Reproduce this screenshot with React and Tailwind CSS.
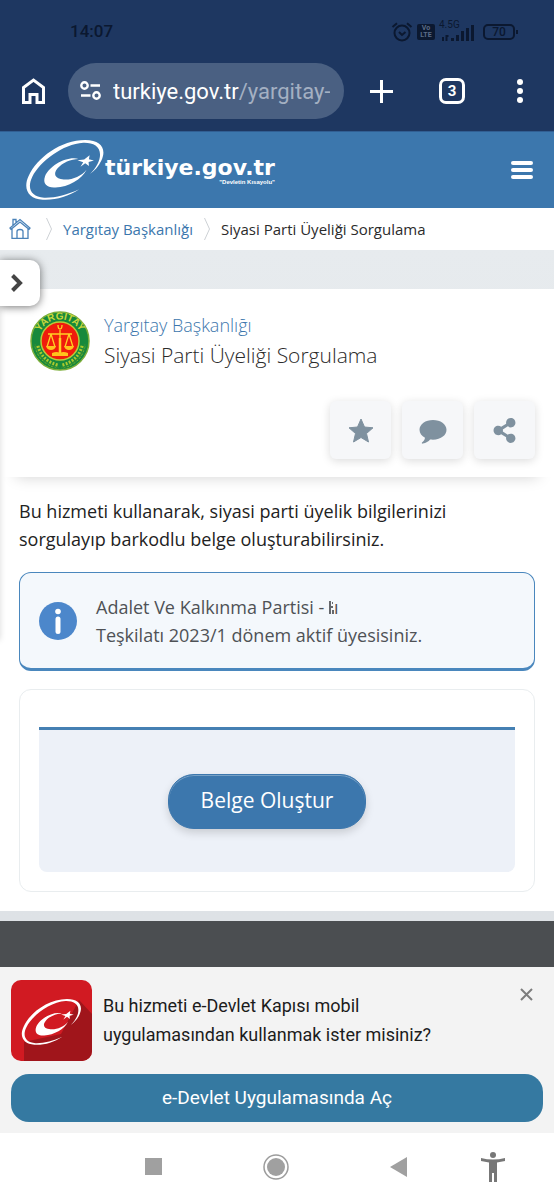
import React from 'react';
import { FaShareAlt } from 'react-icons/fa';

const RING =
    'M178 161C145 183 108 194 70 192C28 190 10 160 28 122C52 68 124 15 196 15C244 15 260 42 244 76C236 93 224 106 210 116C228 98 240 78 240 58C240 32 218 22 190 23C130 27 62 78 39 124C22 158 36 184 74 186C106 187 142 178 178 161Z';
const CRESCENT =
    'M176 71C140 62 90 92 77 122C68 146 84 158 108 156C146 154 186 132 200 103C184 123 156 134 132 132C106 130 100 116 114 99C128 82 154 71 176 71Z';
const STAR = '209,60 207,72 222,76 206,80 207,92 196,84 182,94 190,81 173,75 193,73';

function Swirl({ className }) {
    return (
        <svg viewBox="18 12 236 184" className={className} fill="currentColor" aria-hidden="true">
            <path d={RING} />
            <path d={CRESCENT} />
            <polygon points={STAR} />
        </svg>
    );
}

function StatusBar() {
    return (
        <div className="flex h-16 items-center justify-between pl-[70px] pr-9 text-[#0b1830]">
            <span className="text-[17px] font-medium">14:07</span>
            <div className="flex items-center gap-1">
                <svg width="22" height="20" viewBox="0 0 22 20" fill="none" stroke="currentColor" strokeWidth="2">
                    <circle cx="11" cy="11" r="7.5" />
                    <path d="M1.5 5L6 1.2M20.5 5L16 1.2M8 10l3 3 3.5-3" />
                </svg>
                <span className="flex h-4 w-[18px] flex-col items-center justify-center rounded-xs bg-[#0b1830] text-[7px] leading-[7px] font-bold text-[#5b6c88]">
                    <span>Vo</span>
                    <span>LTE</span>
                </span>
                <span className="relative">
                    <span className="absolute left-0 -top-1 text-[10px] leading-[12px]">4.5G</span>
                    <svg width="36" height="18" viewBox="0 0 36 18" fill="currentColor" className="block">
                        <path d="M3 14h2v4H3zM6.500 12h3v2H8.500v4h-2zM12 15h3v3h-3zM17 12h3v6h-3zM22 8h3v10h-3zM27 5h3v13h-3zM32 2h3v16h-3z" />
                    </svg>
                </span>
                <span className="ml-1 flex items-center">
                    <span className="flex h-4 w-8 items-center justify-center rounded-[5px] border-2 border-current text-[12px] leading-3 font-medium">
                        70
                    </span>
                    <span className="ml-px h-1 w-0.5 bg-current" />
                </span>
            </div>
        </div>
    );
}

function BrowserBar() {
    return (
        <div className="-mt-px flex h-14 items-center pl-[21px] pr-[30px] text-white">
            <button aria-label="Ana sayfa">
                <svg width="25" height="28" viewBox="0 0 25 28" fill="none" stroke="currentColor" strokeWidth="3">
                    <path d="M2.500 25.500V10.500L12.500 3l10 7.500v15H16v-8H9v8z" />
                </svg>
            </button>
            <div className="ml-[22px] flex h-14 min-w-0 flex-1 items-center rounded-full bg-[#4a6082] pl-3 pr-[10px]">
                <svg width="22" height="20" viewBox="0 0 22 20" fill="none" stroke="currentColor" strokeWidth="2.400" className="shrink-0">
                    <circle cx="4.500" cy="4.500" r="3.200" />
                    <path d="M10.500 4.500H20M1 14.500h9.500" />
                    <circle cx="16.500" cy="14.500" r="3.200" />
                </svg>
                <span className="ml-[11px] overflow-hidden text-[22px] whitespace-nowrap">
                    turkiye.gov.tr<span className="text-[#a4b0c2]">/yargitay-</span>
                </span>
            </div>
            <button aria-label="Yeni sekme" className="ml-[26px]">
                <svg width="23" height="23" viewBox="0 0 23 23" stroke="currentColor" strokeWidth="3">
                    <path d="M11.500 0v23M0 11.500h23" />
                </svg>
            </button>
            <button className="ml-[46px] flex size-[26px] items-center justify-center rounded-[7px] border-3 border-white text-[15px] leading-4 font-bold">
                3
            </button>
            <button aria-label="Menü" className="ml-[51px] flex w-[8px] flex-col items-center gap-[3px]">
                <span className="size-[6px] rounded-full bg-white" />
                <span className="size-[6px] rounded-full bg-white" />
                <span className="size-[6px] rounded-full bg-white" />
            </button>
        </div>
    );
}

function SiteHeader() {
    return (
        <header className="flex h-[77px] items-center justify-between border-t border-[#315f93] bg-[#3c77ad] pl-[25px] pr-[21px] text-white">
            <a href="#" className="flex items-center">
                <Swirl className="h-[62px] w-20" />
                <span className="flex flex-col items-end font-['DejaVu_Sans',sans-serif] font-bold">
                    <span className="text-[22px] leading-6">türkiye.gov.tr</span>
                    <span className="font-['Liberation_Sans',sans-serif] text-[6px] leading-[4px]">"Devletin Kısayolu"</span>
                </span>
            </a>
            <button aria-label="Site menüsü" className="flex w-[22px] flex-col gap-[3px]">
                <span className="h-1 rounded-xs bg-white" />
                <span className="h-1 rounded-xs bg-white" />
                <span className="h-1 rounded-xs bg-white" />
            </button>
        </header>
    );
}

function Chevron() {
    return (
        <svg width="6" height="24" viewBox="0 0 6 24" fill="none" stroke="#cdd1d5" className="shrink-0">
            <path d="M.5 1l5 11-5 11" />
        </svg>
    );
}

function Breadcrumb() {
    return (
        <nav className="flex h-[42px] items-center bg-white pl-[9px] font-['Open_Sans',sans-serif] text-[15px] whitespace-nowrap">
            <a href="#" aria-label="Ana sayfa" className="mr-[15px]">
                <svg width="22" height="22" viewBox="0 0 22 22" fill="none" stroke="#4a82b8" strokeWidth="1.300">
                    <path d="M3 10v10.300h16V10M1 10l10-8.500L21 10l-1 1.300L11 4 2 11.300zM4 7V1.500h3V5M8 20v-6.500q0-2 3-2t3 2V20" />
                </svg>
            </a>
            <Chevron />
            <a href="#" className="mx-[11px] text-[#3c77ad]">Yargıtay Başkanlığı</a>
            <Chevron />
            <span className="ml-[11px] text-[#2b2b2b]">Siyasi Parti Üyeliği Sorgulama</span>
        </nav>
    );
}

function Emblem() {
    return (
        <svg width="60" height="62" viewBox="0 0 60 62" className="shrink-0" aria-hidden="true">
            <defs>
                <path id="arc" d="M8.500 36A22 22 0 1 1 51.500 36" />
            </defs>
            <circle cx="30" cy="31" r="29" fill="#17893c" stroke="#7cae3a" strokeWidth="1.500" />
            <path d="M7 36Q11 52 28 56M53 36Q49 52 32 56" fill="none" stroke="#a9c92e" strokeWidth="5" strokeDasharray="2 1.500" />
            <path d="M5 34Q9 53 29 58M55 34Q51 53 31 58" fill="none" stroke="#2d8c35" strokeWidth="1.500" />
            <circle cx="30" cy="31" r="19" fill="#f01c0c" stroke="#b8cc38" strokeWidth="1.500" />
            <text fontSize="10" fontWeight="700" fill="#c9d63c" textAnchor="middle" className="font-['Liberation_Sans',sans-serif]">
                <textPath href="#arc" startOffset="50%">YARGITAY</textPath>
            </text>
            <g fill="none" stroke="#ffcf24" strokeWidth="1.300">
                <path d="M30 20v24M18 24h24M21 24l-4 13M21 24l4 13M39 24l-4 13M39 24l4 13" />
                <path d="M28 15q0 4 2 4t2-4" />
                <path d="M30 28v16" strokeWidth="2.500" />
            </g>
            <path d="M16 36h10q-1 4-5 4t-5-4zM34 36h10q-1 4-5 4t-5-4zM22 43q5-2 8 0 3-2 8 0v3H22z" fill="#ffc21c" />
        </svg>
    );
}

function ActionButton({ label, children }) {
    return (
        <button
            aria-label={label}
            className="flex h-[58px] w-[61px] items-center justify-center rounded-md bg-[#f6f7f9] text-[#7f919f] shadow-[0_2px_10px_rgba(0,0,0,0.14)]"
        >
            {children}
        </button>
    );
}

function ServiceHeader() {
    return (
        <section className="bg-white pt-[21px] pb-[18px] pl-[30px] pr-[19px] shadow-[0_16px_14px_-16px_rgba(0,0,0,0.18)]">
            <div className="flex items-start gap-[14px]">
                <Emblem />
                <h1 className="font-light">
                    <a href="#" className="block text-[18px] leading-[30px] text-[#3c77ad]">Yargıtay Başkanlığı</a>
                    <span className="block text-[21px] leading-[30px] text-[#2b2b2b]">Siyasi Parti Üyeliği Sorgulama</span>
                </h1>
            </div>
            <div className="mt-[29px] flex justify-end gap-[11px]">
                <ActionButton label="Favorilere ekle">
                    <svg width="26" height="25" viewBox="0 0 26 25" fill="currentColor" stroke="currentColor" strokeLinejoin="round">
                        <path d="M13 1l3.500 8 8.500.8-6.500 5.700 2 8.500L13 19.500 5.500 24l2-8.500L1 9.800 9.500 9z" />
                    </svg>
                </ActionButton>
                <ActionButton label="Yorum yap">
                    <svg width="28" height="24" viewBox="0 0 28 24" fill="currentColor" className="mt-1">
                        <path d="M14 0C6.500 0 .5 4.200.5 9.800c0 3.500 2.300 6.200 5.500 7.900-.3 2-1.400 3.600-3 4.800-.5.700 0 1.300.9 1.100 3-.5 5.600-2.100 7.200-4.100 10.200 1.100 16.400-4 16.400-9.700C27.500 4.200 21.500 0 14 0z" />
                    </svg>
                </ActionButton>
                <ActionButton label="Paylaş">
                    <FaShareAlt size={25} />
                </ActionButton>
            </div>
        </section>
    );
}

function InfoBox() {
    return (
        <div className="mt-[19px] flex h-[99px] items-center rounded-xl border border-b-3 border-[#4a87bd] bg-[#f4f8fc] pl-[19px] text-[18px] leading-7 text-[#4f5256]">
            <svg width="38" height="38" viewBox="0 0 38 38" className="shrink-0" aria-hidden="true">
                <circle cx="19" cy="19" r="19" fill="#4c87cb" />
                <circle cx="19" cy="9.500" r="2.800" fill="#fff" />
                <path d="M19 17v12.500" stroke="#fff" strokeWidth="5" strokeLinecap="round" />
            </svg>
            <p className="ml-[19px]">
                Adalet Ve Kalkınma Partisi -{' '}
                <svg width="5" height="13" viewBox="0 0 5 13" className="inline align-baseline" fill="#65686c">
                    <path d="M0 0h2v13H0zM3 1h1v2H3zM2 5h2v2H2zM3 9h2v4H3z" />
                </svg>
                ı
                <br />
                Teşkilatı 2023/1 dönem aktif üyesisiniz.
            </p>
        </div>
    );
}

function AppBanner() {
    return (
        <aside className="bg-[#f3f3f3] px-[11px] pt-[13px] pb-[11px]">
            <div className="flex items-start">
                <div className="relative size-[81px] shrink-0 overflow-hidden rounded-[10px] bg-[#d11a22] text-white">
                    <svg viewBox="0 0 81 81" className="absolute inset-0" aria-hidden="true">
                        <path d="M68 20L81 34V81H13V62L50 54z" fill="#a0151b" />
                    </svg>
                    <Swirl className="absolute top-[17px] left-[10px] h-[50px] w-[61px]" />
                </div>
                <p className="mt-[11px] ml-[11px] flex-1 text-[18px] leading-[29px] text-[#1c1c1c]">
                    Bu hizmeti e-Devlet Kapısı mobil
                    <br />
                    uygulamasından kullanmak ister misiniz?
                </p>
                <button aria-label="Kapat" className="mt-2 mr-[10px]">
                    <svg width="13" height="13" viewBox="0 0 13 13" stroke="#7d7d7d" strokeWidth="2">
                        <path d="M1 1l11 11M12 1L1 12" />
                    </svg>
                </button>
            </div>
            <button className="mt-[13px] h-12 w-full rounded-[18px] bg-[#3579a1] text-[19px] text-white">
                e-Devlet Uygulamasında Aç
            </button>
        </aside>
    );
}

function SystemNav() {
    return (
        <div className="flex h-[67px] items-center bg-white pl-[145px] pr-[48px]">
            <div className="flex flex-1 items-center justify-between">
                <span className="size-[17px] bg-[#a0a0a0]" />
                <svg width="26" height="26" viewBox="0 0 26 26">
                    <circle cx="13" cy="13" r="12" fill="none" stroke="#9c9c9c" strokeWidth="1.500" />
                    <circle cx="13" cy="13" r="9" fill="#a0a0a0" />
                </svg>
                <svg width="17" height="20" viewBox="0 0 17 20" fill="#a0a0a0">
                    <path d="M17 0v20L0 10z" />
                </svg>
            </div>
            <svg width="26" height="30" viewBox="0 0 26 30" fill="#777" className="ml-[73px]">
                <circle cx="13" cy="3" r="3" />
                <path d="M1 6q12 3 24 0v3l-8 1.500V30h-3v-9h-2v9H9V10.500L1 9z" />
            </svg>
        </div>
    );
}

export default function App() {
    return (
        <div className="min-h-screen bg-white font-[Roboto,sans-serif]">
            <div className="bg-[#1e3761] pb-3">
                <StatusBar />
                <BrowserBar />
            </div>
            <SiteHeader />
            <Breadcrumb />
            <div className="relative overflow-hidden bg-linear-to-b from-[#e7ebee] to-[#dee2e6] pt-[39px] pb-[10px] font-['Open_Sans',sans-serif]">
                <main className="bg-white pb-[19px]">
                    <ServiceHeader />
                    <div className="px-[19px] pt-5">
                        <p className="text-[18px] leading-7 text-[#222]">
                            Bu hizmeti kullanarak, siyasi parti üyelik bilgilerinizi sorgulayıp barkodlu belge oluşturabilirsiniz.
                        </p>
                        <InfoBox />
                        <form className="mt-[18px] rounded-xl border border-[#e9edef] px-[19px] pt-[37px] pb-[19px]">
                            <div className="flex h-[145px] items-center justify-center rounded-b-lg border-t-3 border-[#4580b3] bg-[#edf1f8] pr-5">
                                <button
                                    type="button"
                                    className="h-[55px] rounded-[26px] border border-[#3c77ad] bg-[#3c77ad] px-8 text-[21px] text-white shadow-[0_4px_8px_rgba(0,0,0,0.15),inset_0_1px_0_rgba(255,255,255,0.3)]"
                                >
                                    Belge Oluştur
                                </button>
                            </div>
                        </form>
                    </div>
                </main>
                {/* Kapalı yan menünün gölgesi ve açma düğmesi */}
                <div className="absolute top-5 -left-2 h-[370px] w-2 shadow-[0_0_6px_rgba(0,0,0,0.15)]" />
                <button
                    aria-label="Menüyü aç"
                    className="absolute top-[10px] left-0 flex h-[46px] w-10 items-center rounded-r-[10px] bg-white pl-[11px] shadow-[0_1px_8px_rgba(0,0,0,0.55)]"
                >
                    <svg width="12" height="18" viewBox="0 0 12 18" fill="none" stroke="#444" strokeWidth="4">
                        <path d="M1.500 1.500L9 9l-7.500 7.500" />
                    </svg>
                </button>
            </div>
            <footer className="h-[46px] bg-[#4b4e51]" />
            <AppBanner />
            <SystemNav />
        </div>
    );
}
